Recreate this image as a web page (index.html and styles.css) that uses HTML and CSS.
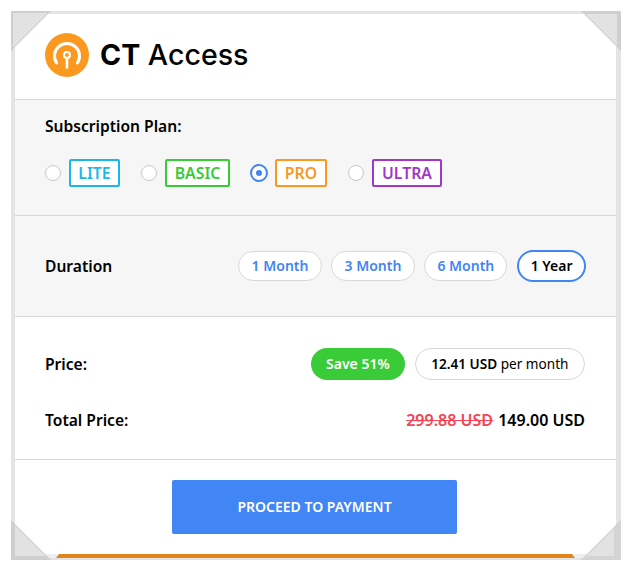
FILE: index.html
```html
<!DOCTYPE html>
<html lang="en">
<head>
<meta charset="utf-8">
<title>CT Access</title>
<link rel="stylesheet" href="styles.css">
</head>
<body>
<main class="card">
  <span class="corner corner-tl"></span>
  <span class="corner corner-tr"></span>
  <span class="corner corner-bl"></span>
  <span class="corner corner-br"></span>
  <header class="brand">
    <svg class="logo" viewBox="0 0 44 44" aria-hidden="true">
      <circle cx="22" cy="22" r="22" fill="#fa9820"/>
      <path d="M11.6 30 A12.5 12.5 0 1 1 32.4 30" fill="none" stroke="#fff" stroke-width="3" stroke-linecap="round"/>
      <circle cx="22" cy="22" r="3" fill="none" stroke="#fff" stroke-width="2"/>
      <path d="M22 25 V34.5" stroke="#fff" stroke-width="2.6" stroke-linecap="round"/>
    </svg>
    <h1 class="brand-name"><b>CT</b> Access</h1>
  </header>
  <section class="plans">
    <h2 class="plans-title">Subscription Plan:</h2>
    <div class="plan-list">
      <label class="plan"><span class="radio"></span><span class="tag tag-lite">LITE</span></label>
      <label class="plan"><span class="radio"></span><span class="tag tag-basic">BASIC</span></label>
      <label class="plan"><span class="radio radio-on"></span><span class="tag tag-pro">PRO</span></label>
      <label class="plan"><span class="radio"></span><span class="tag tag-ultra">ULTRA</span></label>
    </div>
  </section>
  <section class="duration">
    <span class="label">Duration</span>
    <div class="pills">
      <span class="pill">1 Month</span>
      <span class="pill">3 Month</span>
      <span class="pill">6 Month</span>
      <span class="pill pill-on">1 Year</span>
    </div>
  </section>
  <section class="price">
    <div class="price-row">
      <span class="label">Price:</span>
      <div class="price-info">
        <span class="save">Save 51%</span>
        <span class="monthly"><b>12.41 USD</b> per month</span>
      </div>
    </div>
    <div class="price-row total-row">
      <span class="label">Total Price:</span>
      <span class="total"><s class="old">299.88 USD</s> 149.00 USD</span>
    </div>
  </section>
  <footer class="action">
    <button class="pay" type="button">PROCEED TO PAYMENT</button>
    <div class="bar"></div>
  </footer>
</main>
</body>
</html>
```
FILE: styles.css
```css
* { box-sizing: border-box; }
html, body { margin: 0; background: #fff; }
body {
  width: 633px;
  height: 570px;
  padding: 11px 12px 10px 11px;
  overflow: hidden;
  font-family: "Noto Sans", "Open Sans", sans-serif;
  color: #000;
}
.card {
  position: relative;
  width: 610px;
  height: 549px;
  border: 4px solid #e4e4e4;
  border-top-width: 3px;
  border-right-width: 5px;
  border-bottom-width: 2px;
  background: #fff;
  display: flex;
  flex-direction: column;
}
.corner {
  position: absolute;
  width: 40px;
  height: 40px;
  z-index: 2;
}
.corner-tl {
  left: -4px;
  top: -3px;
  clip-path: polygon(0 0, 100% 0, 0 100%);
  background: linear-gradient(135deg, #e2e2e2 calc(50% - 1.5px), #cdcdcd calc(50% - 0.5px));
  box-shadow: inset 2px 2px 0 #cfcfcf;
}
.corner-tr {
  right: -5px;
  top: -3px;
  clip-path: polygon(0 0, 100% 0, 100% 100%);
  background: linear-gradient(225deg, #e2e2e2 calc(50% - 1.5px), #cdcdcd calc(50% - 0.5px));
  box-shadow: inset -4px 3px 0 #cfcfcf;
}
.corner-bl {
  left: -4px;
  bottom: -2px;
  clip-path: polygon(0 0, 100% 100%, 0 100%);
  background: linear-gradient(45deg, #e2e2e2 calc(50% - 1.5px), #cdcdcd calc(50% - 0.5px));
  box-shadow: inset 4px -4px 0 #cfcfcf;
}
.corner-br {
  right: -5px;
  bottom: -2px;
  clip-path: polygon(100% 0, 100% 100%, 0 100%);
  background: linear-gradient(315deg, #e2e2e2 calc(50% - 1.5px), #cdcdcd calc(50% - 0.5px));
  box-shadow: inset -7px -4px 0 #d4d4d4;
}
.brand {
  height: 86px;
  padding: 19px 30px 0;
  display: flex;
  align-items: flex-start;
  gap: 11px;
  border-bottom: 1px solid #d8d8d8;
}
.logo { width: 44px; height: 44px; flex: none; }
.brand-name {
  margin: 0;
  font: 500 28.6px/44px Inter, "Noto Sans", sans-serif;
}
.brand-name b { font-weight: 700; }
.plans {
  height: 116px;
  padding: 15px 30px 0;
  background: #f6f6f6;
  border-bottom: 1px solid #d8d8d8;
}
.plans-title {
  margin: 0;
  font-size: 15.6px;
  line-height: 22px;
  font-weight: 600;
}
.plan-list { display: flex; margin-top: 22px; }
.plan { display: flex; align-items: center; gap: 8px; margin-right: 21px; }
.radio {
  width: 16px;
  height: 16px;
  border: 1px solid #c8c8c8;
  border-radius: 50%;
  background: #fff;
}
.radio-on {
  width: 18px;
  height: 18px;
  border: 2px solid #4285f4;
  position: relative;
  margin-left: -1px;
  margin-right: -1px;
}
.radio-on::after {
  content: "";
  position: absolute;
  left: 4px;
  top: 4px;
  width: 6px;
  height: 6px;
  border-radius: 50%;
  background: #4285f4;
}
.tag {
  height: 28px;
  border: 2px solid;
  border-radius: 2px;
  background: #fff;
  font-size: 15.8px;
  line-height: 24px;
  font-weight: 600;
  text-align: center;
}
.tag-lite { width: 51px; color: #1bb7e6; }
.tag-basic { width: 65px; color: #3acb38; }
.tag-pro { width: 52px; color: #fa9820; }
.tag-ultra { width: 70px; color: #a335c8; }
.duration {
  height: 101px;
  padding: 0 30px;
  background: #f6f6f6;
  border-bottom: 1px solid #d8d8d8;
  display: flex;
  align-items: center;
  justify-content: space-between;
}
.label { font-size: 15.6px; font-weight: 600; line-height: 20px; }
.pills { display: flex; align-items: center; gap: 9.7px; }
.pill {
  height: 30px;
  padding: 0 12.2px;
  border: 1px solid #d8d8d8;
  border-radius: 15px;
  background: #fff;
  color: #4285f4;
  font-size: 14px;
  font-weight: 600;
  line-height: 28px;
}
.pill-on {
  height: 32px;
  padding: 0 11.5px;
  border: 2px solid #4285f4;
  border-radius: 16px;
  color: #000;
  line-height: 28px;
}
.price {
  height: 143px;
  padding: 31px 31px 0 30px;
  border-bottom: 1px solid #d8d8d8;
}
.price-row { display: flex; align-items: center; justify-content: space-between; }
.price-info { display: flex; gap: 10px; }
.save {
  height: 32px;
  padding: 0 15px;
  border-radius: 16px;
  background: #3acb38;
  color: #fff;
  font-size: 14px;
  font-weight: 600;
  line-height: 32px;
}
.monthly {
  height: 32px;
  padding: 0 15.5px;
  border: 1px solid #d8d8d8;
  border-radius: 16px;
  font-size: 13.6px;
  line-height: 30px;
}
.monthly b { font-weight: 600; }
.total-row { margin-top: 29px; }
.total { font-size: 16px; font-weight: 600; line-height: 22px; }
.old { margin-right: 1px; color: #f44455; }
.action {
  flex: 1;
  position: relative;
  display: flex;
  justify-content: center;
  padding: 20px 2px 0 0;
}
.action::before {
  content: "";
  position: absolute;
  left: 0;
  right: 0;
  bottom: 0;
  height: 4px;
  background: #eeeeee;
}
.pay {
  width: 285px;
  height: 54px;
  padding: 0 0 2px;
  border: 0;
  border-radius: 2px;
  background: #4285f4;
  color: #fff;
  font: 600 14px "Noto Sans", sans-serif;
}
.bar {
  position: absolute;
  left: 41px;
  right: 41px;
  bottom: 0;
  height: 4px;
  background: #e28418;
  clip-path: polygon(3px 0, calc(100% - 3px) 0, 100% 100%, 0 100%);
}
```
